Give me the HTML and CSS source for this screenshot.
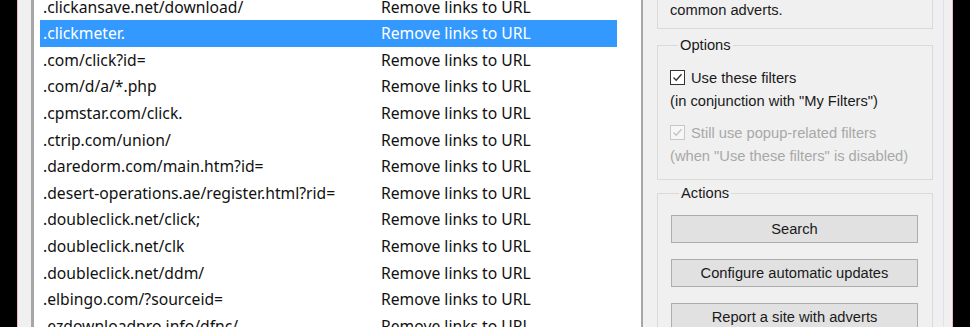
FILE: index.html
```html
<!DOCTYPE html>
<html>
<head>
<meta charset="utf-8">
<link rel="stylesheet" href="styles.css">
</head>
<body>
<div class="window">
  <div class="list-wrap">
    <div class="list">
      <div class="rows">
        <div class="row"><span class="c1">.clickansave.net/download/</span><span class="c2">Remove links to URL</span></div>
        <div class="row sel"><span class="c1">.clickmeter.</span><span class="c2">Remove links to URL</span></div>
        <div class="row"><span class="c1">.com/click?id=</span><span class="c2">Remove links to URL</span></div>
        <div class="row"><span class="c1">.com/d/a/*.php</span><span class="c2">Remove links to URL</span></div>
        <div class="row"><span class="c1">.cpmstar.com/click.</span><span class="c2">Remove links to URL</span></div>
        <div class="row"><span class="c1">.ctrip.com/union/</span><span class="c2">Remove links to URL</span></div>
        <div class="row"><span class="c1">.daredorm.com/main.htm?id=</span><span class="c2">Remove links to URL</span></div>
        <div class="row"><span class="c1">.desert-operations.ae/register.html?rid=</span><span class="c2">Remove links to URL</span></div>
        <div class="row"><span class="c1">.doubleclick.net/click;</span><span class="c2">Remove links to URL</span></div>
        <div class="row"><span class="c1">.doubleclick.net/clk</span><span class="c2">Remove links to URL</span></div>
        <div class="row"><span class="c1">.doubleclick.net/ddm/</span><span class="c2">Remove links to URL</span></div>
        <div class="row"><span class="c1">.elbingo.com/?sourceid=</span><span class="c2">Remove links to URL</span></div>
        <div class="row"><span class="c1">.ezdownloadpro.info/dfnc/</span><span class="c2">Remove links to URL</span></div>
      </div>
    </div>
  </div>
  <div class="side">
    <div class="group first">
      <div class="text">common adverts.</div>
    </div>
    <fieldset class="group options">
      <legend>Options</legend>
      <label class="check"><span class="box"><svg viewBox="0 0 13 13" width="13" height="13"><path d="M2.5 6.5 L5.2 9.3 L10.5 3.2" fill="none" stroke="#333" stroke-width="1.4"/></svg></span>Use these filters</label>
      <div class="text sub">(in conjunction with "My Filters")</div>
      <label class="check disabled"><span class="box"><svg viewBox="0 0 13 13" width="13" height="13"><path d="M2.5 6.5 L5.2 9.3 L10.5 3.2" fill="none" stroke="#c4c4c4" stroke-width="1.4"/></svg></span>Still use popup-related filters</label>
      <div class="text sub disabled">(when "Use these filters" is disabled)</div>
    </fieldset>
    <fieldset class="group actions">
      <legend>Actions</legend>
      <div class="btn">Search</div>
      <div class="btn">Configure automatic updates</div>
      <div class="btn">Report a site with adverts</div>
    </fieldset>
  </div>
  <div class="edge"></div>
</div>
</body>
</html>
```
FILE: styles.css
```css
html, body {
  margin: 0;
  padding: 0;
  background: #000;
  width: 970px;
  height: 327px;
  overflow: hidden;
}
.window {
  margin-left: 17px;
  width: 934px;
  height: 327px;
  border-left: 1px solid #e9b9d2;
  border-right: 1px solid #e9b9d2;
  background: #f0f0f0;
  display: flex;
  overflow: hidden;
}
.list-wrap {
  padding-left: 13px;
  height: 327px;
  flex-shrink: 0;
}
.list {
  width: 607px;
  height: 340px;
  margin-top: -10px;
  border-left: 3px solid #a6a6a6;
  border-right: 2px solid #a6a6a6;
  background: #fff;
  overflow: hidden;
  font-family: "Noto Sans", "Open Sans", sans-serif;
  font-size: 15.7px;
  color: #111;
}
.rows {
  margin-top: 3.4px;
  margin-left: 6px;
  width: 577px;
}
.row {
  height: 26.6px;
  display: flex;
  align-items: center;
  white-space: nowrap;
}
.row .c1 {
  width: 338px;
  padding-left: 3px;
  flex-shrink: 0;
}
.row.sel {
  background: #3399ff;
  color: #fff;
}
.side {
  width: 276px;
  flex-shrink: 0;
  padding-left: 14px;
  display: flex;
  flex-direction: column;
  font-family: "Liberation Sans", Arial, sans-serif;
  font-size: 14.7px;
  color: #1a1a1a;
}
.group {
  border: 1px solid #dadada;
  margin: 0;
  border-radius: 0;
  flex-shrink: 0;
}
.first {
  margin-top: -10px;
  height: 39px;
  padding: 11px 12px 0 12px;
  box-sizing: border-box;
}
fieldset.group {
  padding: 0;
  min-width: 0;
}
legend {
  padding: 0 2px;
  margin-left: 8px;
  line-height: 17px;
}
.options {
  margin-top: 8px;
  height: 143px;
  box-sizing: border-box;
  padding: 15px 12px 0 12px !important;
}
.check {
  display: flex;
  align-items: center;
  height: 17px;
  gap: 6px;
  margin-left: 0;
}
.box {
  width: 13px;
  height: 13px;
  border: 1px solid #333;
  background: #fff;
  display: block;
}
.box svg { display: block; }
.disabled { color: #a8a8a8; }
.check.disabled .box { border-color: #c8c8c8; background: #f7f7f7; }
.sub {
  margin-top: 7px;
  height: 17px;
  margin-bottom: 14px;
}
.actions {
  margin-top: 5px;
  height: 160px;
  box-sizing: border-box;
  padding: 13px 14px 0 13px !important;
}
.btn {
  height: 28px;
  box-sizing: border-box;
  border: 1px solid #adadad;
  background: #e1e1e1;
  display: flex;
  align-items: center;
  justify-content: center;
  margin-bottom: 16px;
  flex-shrink: 0;
}
.edge {
  margin-left: 10px;
  width: 1px;
  flex-shrink: 0;
  background: #dde3ea;
}
```
